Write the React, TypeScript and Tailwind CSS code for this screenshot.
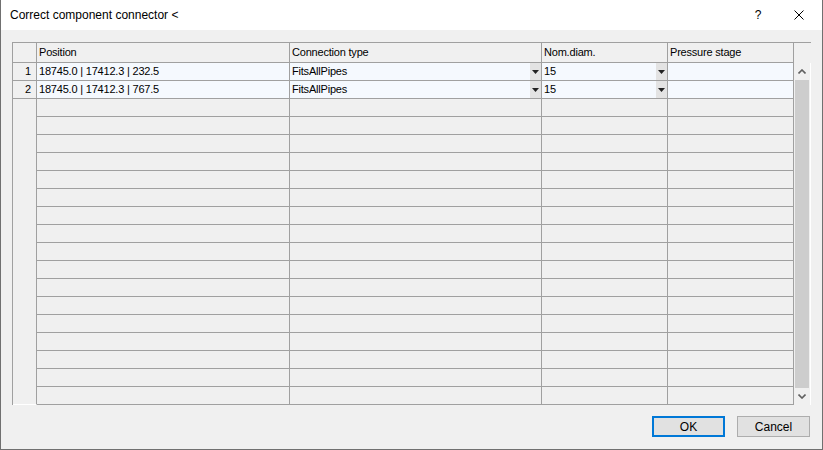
import React from 'react';

const rows = [
    { n: '1', pos: '18745.0 | 17412.3 | 232.5', type: 'FitsAllPipes', dn: '15', stage: '' },
    { n: '2', pos: '18745.0 | 17412.3 | 767.5', type: 'FitsAllPipes', dn: '15', stage: '' },
];

const emptyRows = Array.from({ length: 17 }, (_, i) => i);

const DropArrow = () => (
    <div className="w-[11px] h-full bg-[#e3e3e3] flex items-center justify-center shrink-0">
        <svg width="7" height="4" viewBox="0 0 7 4">
            <path d="M0 0 H7 L3.5 4 Z" fill="#222" />
        </svg>
    </div>
);

const Chevron = ({ up }: { up?: boolean }) => (
    <svg width="8" height="5" viewBox="0 0 8 5">
        <path d={up ? 'M0.5 4.5 L4 1 L7.5 4.5' : 'M0.5 0.5 L4 4 L7.5 0.5'} fill="none" stroke="#606060" strokeWidth="1.6" />
    </svg>
);

export default function App() {
    return (
        <div
            className="w-[823px] h-[450px] flex flex-col bg-[#f0f0f0] border-l border-r border-b border-[#707070] text-black"
            style={{ fontFamily: '"Liberation Sans", Arial, sans-serif' }}
        >
            {/* Title bar */}
            <div className="h-[30px] bg-white flex items-center shrink-0">
                <div className="pl-[9px] text-[12px] flex-1">Correct component connector &lt;</div>
                <div className="w-[20px] text-[12px] mr-[26px] text-center">?</div>
                <div className="w-[10px] h-[10px] mr-[18px]">
                    <svg width="10" height="10" viewBox="0 0 10 10">
                        <path d="M0.5 0.5 L9.5 9.5 M9.5 0.5 L0.5 9.5" stroke="#000" strokeWidth="1" />
                    </svg>
                </div>
            </div>

            {/* Body */}
            <div className="flex-1 flex flex-col pl-[11px] pr-[11px] pt-[12px]">
                {/* Grid */}
                <div className="w-[799px] h-[363px] flex flex-col border-l border-t border-[#a0a0a0] text-[11px] tracking-[-0.2px]">
                    {/* Header */}
                    <div className="h-[20px] flex shrink-0">
                        <div className="w-[24px] border-r border-b border-[#a0a0a0]" />
                        <div className="w-[253px] border-r border-b border-[#a0a0a0] pl-[2px] flex items-center">Position</div>
                        <div className="w-[252px] border-r border-b border-[#a0a0a0] pl-[2px] flex items-center">Connection type</div>
                        <div className="w-[126px] border-r border-b border-[#a0a0a0] pl-[2px] flex items-center">Nom.diam.</div>
                        <div className="w-[126px] border-r border-b border-[#a0a0a0] pl-[2px] flex items-center">Pressure stage</div>
                        <div className="w-[17px]" />
                    </div>

                    <div className="flex-1 flex">
                        {/* Rows */}
                        <div className="flex flex-col w-[781px]">
                            {rows.map((r) => (
                                <div key={r.n} className="h-[18px] flex shrink-0">
                                    <div className="w-[24px] border-r border-b border-[#a0a0a0] flex items-center justify-end pr-[5px]">{r.n}</div>
                                    <div className="w-[253px] border-r border-b border-[#a0a0a0] bg-[#f5f9fe] pl-[2px] flex items-center">{r.pos}</div>
                                    <div className="w-[252px] border-r border-b border-[#a0a0a0] bg-[#f5f9fe] flex items-center">
                                        <span className="flex-1 pl-[2px]">{r.type}</span>
                                        <DropArrow />
                                    </div>
                                    <div className="w-[126px] border-r border-b border-[#a0a0a0] bg-[#f5f9fe] flex items-center">
                                        <span className="flex-1 pl-[2px]">{r.dn}</span>
                                        <DropArrow />
                                    </div>
                                    <div className="w-[126px] border-r border-b border-[#a0a0a0] bg-[#f5f9fe] pl-[2px] flex items-center">{r.stage}</div>
                                </div>
                            ))}
                            {emptyRows.map((i) => (
                                <div key={i} className="h-[18px] flex shrink-0">
                                    <div className={i === 16 ? 'w-[24px] border-r border-[#a0a0a0] border-b border-b-white' : 'w-[24px] border-r border-[#a0a0a0]'} />
                                    <div className="w-[253px] border-r border-b border-[#a0a0a0]" />
                                    <div className="w-[252px] border-r border-b border-[#a0a0a0]" />
                                    <div className="w-[126px] border-r border-b border-[#a0a0a0]" />
                                    <div className="w-[126px] border-r border-b border-[#a0a0a0]" />
                                </div>
                            ))}
                        </div>

                        {/* Scrollbar */}
                        <div className="w-[17px] flex flex-col bg-[#f0f0f0] border-r border-white">
                            <div className="h-[17px] flex items-center justify-center shrink-0">
                                <Chevron up />
                            </div>
                            <div className="flex-1 mx-[1px] bg-[#cdcdcd]" />
                            <div className="h-[17px] flex items-center justify-center shrink-0">
                                <Chevron />
                            </div>
                        </div>
                    </div>
                </div>

                {/* Buttons */}
                <div className="flex justify-end gap-[12px] mt-[11px] pr-[1px] text-[12px]">
                    <button className="w-[73px] h-[21px] bg-[#e1e1e1] border-2 border-[#0078d7] flex items-center justify-center">OK</button>
                    <button className="w-[73px] h-[21px] bg-[#e1e1e1] border border-[#adadad] flex items-center justify-center">Cancel</button>
                </div>
            </div>
        </div>
    );
}
